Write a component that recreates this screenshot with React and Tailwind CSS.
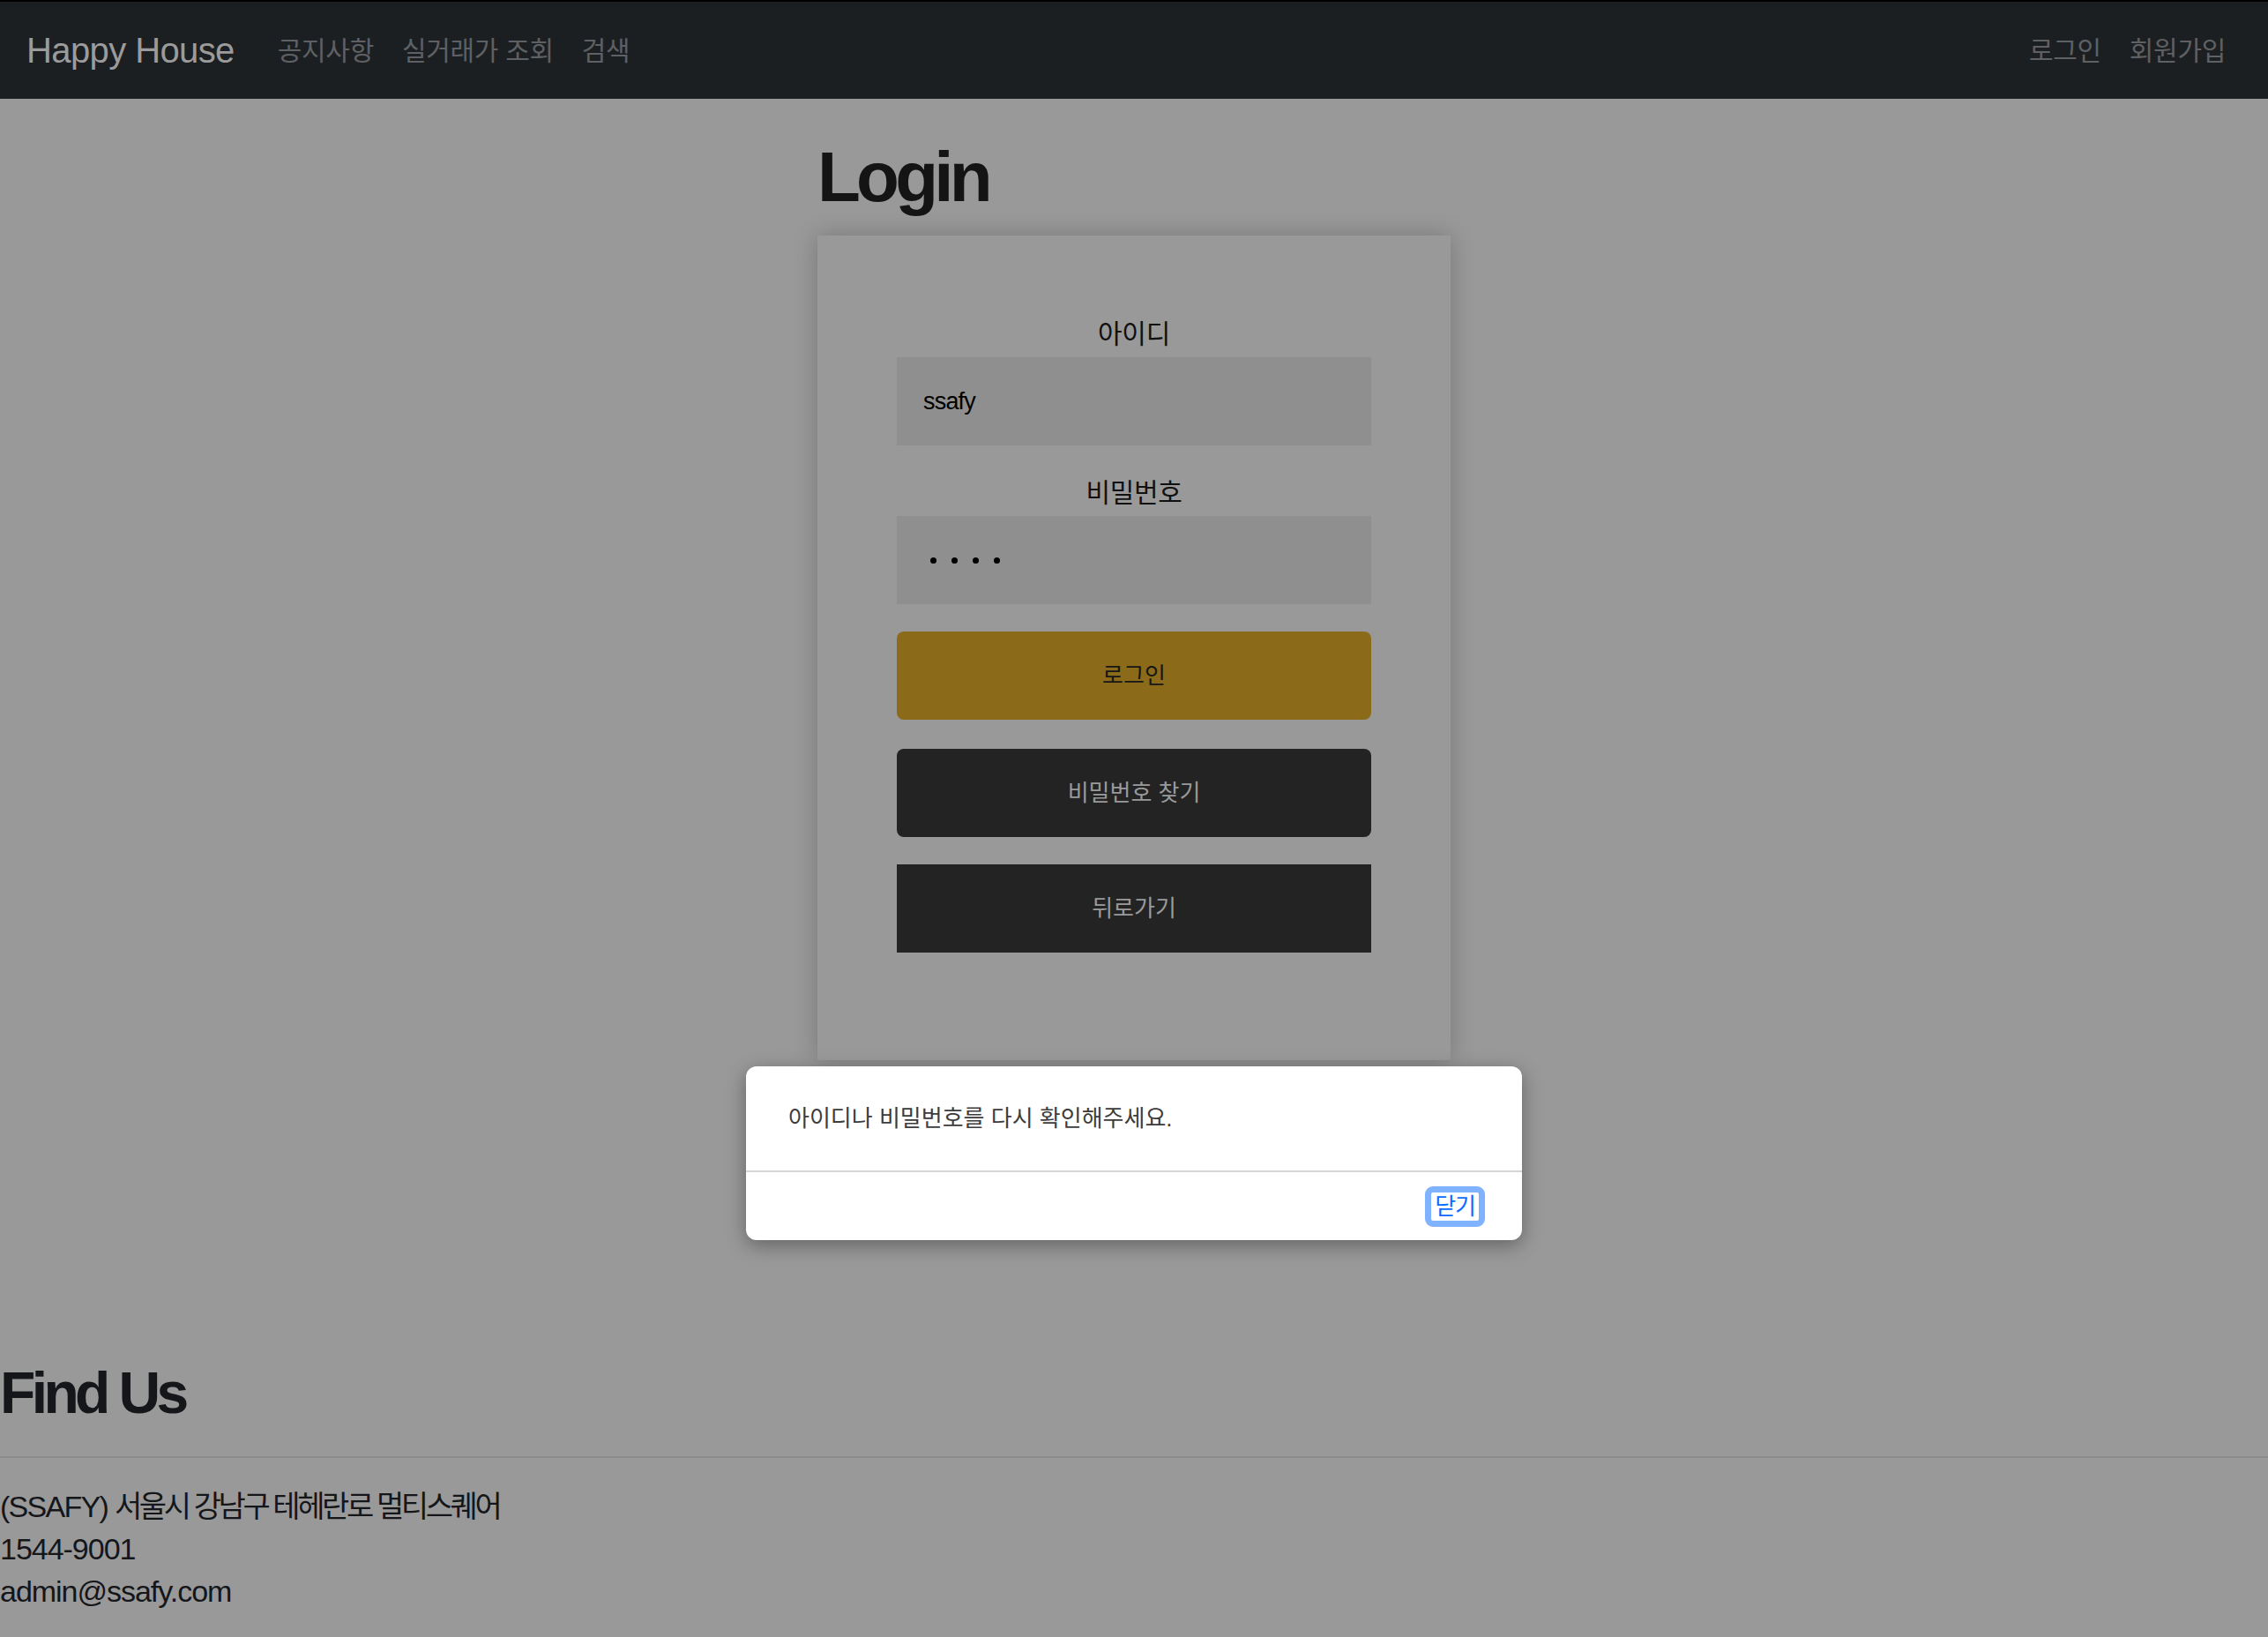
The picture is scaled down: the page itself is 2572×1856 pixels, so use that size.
const FONT = "font-['Liberation_Sans','Noto_Sans_CJK_KR',sans-serif]";

function NavLink({ children }) {
  return (
    <a href="#" className="px-4 text-[30px] tracking-[-0.01em] text-[#5e6063]">
      {children}
    </a>
  );
}

function Field({ label, children }) {
  return (
    <div>
      <div className="text-center text-[30px] leading-[40px] tracking-[-0.01em] text-[#111]">{label}</div>
      <div className="mt-[6px] h-[100px] bg-[#8f8f8f] pl-[30px] flex items-center">{children}</div>
    </div>
  );
}

export default function App() {
  return (
    <div className={`${FONT} relative min-h-screen bg-[#999999] pb-[28px]`}>
      {/* navbar */}
      <nav className="h-[112px] border-t-2 border-black bg-[#1c1f22] flex items-center justify-between pl-[30px] pr-[32px]">
        <div className="flex items-center">
          <a href="#" className="text-[40px] tracking-[-0.015em] text-[#9b9b9b] mr-[33px]">Happy House</a>
          <NavLink>공지사항</NavLink>
          <NavLink>실거래가 조회</NavLink>
          <NavLink>검색</NavLink>
        </div>
        <div className="flex items-center">
          <NavLink>로그인</NavLink>
          <NavLink>회원가입</NavLink>
        </div>
      </nav>

      {/* login */}
      <main className="mx-auto w-[718px] pt-[41px]">
        <h1 className="text-[80px] leading-[1.2] font-bold tracking-[-0.06em] text-[#141414] mb-[18px]">Login</h1>
        <div className="h-[935px] bg-[#999999] shadow-[0_0_26px_rgba(0,0,0,0.22)] px-[90px] pt-[92px]">
          <Field label="아이디">
            <span className="text-[27px] tracking-[-0.03em] text-black">ssafy</span>
          </Field>
          <div className="mt-[34px]">
            <Field label="비밀번호">
              <div className="flex gap-[17px] pl-[8px]">
                <span className="w-[7px] h-[7px] rounded-full bg-black" />
                <span className="w-[7px] h-[7px] rounded-full bg-black" />
                <span className="w-[7px] h-[7px] rounded-full bg-black" />
                <span className="w-[7px] h-[7px] rounded-full bg-black" />
              </div>
            </Field>
          </div>
          <button className="mt-[31px] w-full h-[100px] rounded-[8px] bg-[#8b6b1a] text-[26px] text-[#161616]">로그인</button>
          <button className="mt-[33px] w-full h-[100px] rounded-[8px] bg-[#232323] text-[26px] text-[#9a9a9a]">비밀번호 찾기</button>
          <button className="mt-[31px] w-full h-[100px] bg-[#232323] text-[26px] text-[#9a9a9a]">뒤로가기</button>
        </div>
      </main>

      {/* footer */}
      <footer className="mt-[338px] text-[#141619]">
        <h2 className="text-[66px] leading-[1.2] font-bold tracking-[-0.07em]">Find Us</h2>
        <hr className="mt-[32px] border-0 h-[2px] bg-[#8b8b8b]" />
        <div className="mt-[31px] text-[34px] leading-[48px] tracking-[-0.03em]">
          <p>
            <span className="tracking-[-0.05em]">(SSAFY) </span>
            <span className="tracking-[-0.1em]">서울시 강남구 테헤란로 멀티스퀘어</span>
          </p>
          <p>1544-9001</p>
          <p>admin@ssafy.com</p>
        </div>
      </footer>

      {/* alert dialog */}
      <div className="absolute left-1/2 -translate-x-1/2 top-[1209px] w-[880px] rounded-[12px] bg-white shadow-[0_6px_22px_rgba(0,0,0,0.35)]">
        <div className="h-[118px] flex items-center pl-[48px] text-[26px] text-[#3c3c3c]">
          아이디나 비밀번호를 다시 확인해주세요.
        </div>
        <div className="h-[2px] bg-[#d6d6d6]" />
        <div className="h-[77px] flex items-center justify-end pr-[42px]">
          <button className="h-[46px] px-[4px] border-[7px] border-[#7fb2ff] rounded-[9px] bg-white flex items-center text-[26px] leading-none tracking-[-0.04em] text-[#0b6bfe]">
            닫기
          </button>
        </div>
      </div>
    </div>
  );
}
